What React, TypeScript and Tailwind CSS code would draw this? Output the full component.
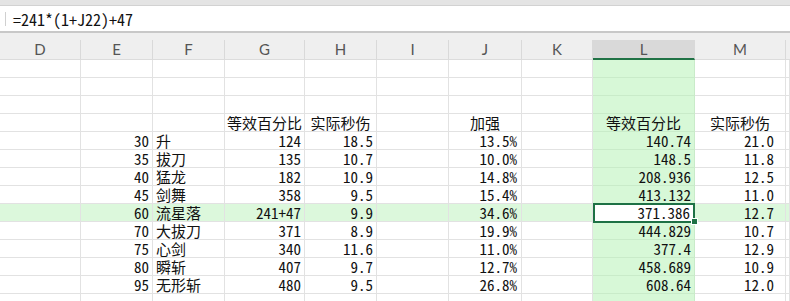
const cols = [
  { key: 'D', w: 'w-[81px]' },
  { key: 'E', w: 'w-[72px]' },
  { key: 'F', w: 'w-[72px]' },
  { key: 'G', w: 'w-[80px]' },
  { key: 'H', w: 'w-[72px]' },
  { key: 'I', w: 'w-[72px]' },
  { key: 'J', w: 'w-[73px]' },
  { key: 'K', w: 'w-[71px]' },
  { key: 'L', w: 'w-[102px]' },
  { key: 'M', w: 'w-[91px]' },
];

type Row = {
  lv: string;
  name: string;
  pct: string;
  dps: string;
  buff: string;
  eq: string;
  real: string;
  active?: boolean;
};

const rows: Row[] = [
  { lv: '30', name: '升', pct: '124', dps: '18.5', buff: '13.5%', eq: '140.74', real: '21.0' },
  { lv: '35', name: '拔刀', pct: '135', dps: '10.7', buff: '10.0%', eq: '148.5', real: '11.8' },
  { lv: '40', name: '猛龙', pct: '182', dps: '10.9', buff: '14.8%', eq: '208.936', real: '12.5' },
  { lv: '45', name: '剑舞', pct: '358', dps: '9.5', buff: '15.4%', eq: '413.132', real: '11.0' },
  { lv: '60', name: '流星落', pct: '241+47', dps: '9.9', buff: '34.6%', eq: '371.386', real: '12.7', active: true },
  { lv: '70', name: '大拔刀', pct: '371', dps: '8.9', buff: '19.9%', eq: '444.829', real: '10.7' },
  { lv: '75', name: '心剑', pct: '340', dps: '11.6', buff: '11.0%', eq: '377.4', real: '12.9' },
  { lv: '80', name: '瞬斩', pct: '407', dps: '9.7', buff: '12.7%', eq: '458.689', real: '10.9' },
  { lv: '95', name: '无形斩', pct: '480', dps: '9.5', buff: '26.8%', eq: '608.64', real: '12.0' },
];

const cellFont =
  "font-['Noto_Sans_Mono_CJK_SC','Noto_Sans_CJK_SC','Liberation_Mono',monospace] text-[15px] leading-[15px] text-[#111]";

function Cell({
  w,
  children,
  align = 'right',
  green,
  className = '',
}: {
  w: string;
  children?: React.ReactNode;
  align?: 'left' | 'right' | 'center';
  green?: boolean;
  className?: string;
}) {
  const a =
    align === 'right' ? 'justify-end pr-[3px]' : align === 'left' ? 'justify-start pl-[3px]' : 'justify-center';
  return (
    <div
      className={`${w} h-[18px] shrink-0 flex items-center whitespace-nowrap border-r border-b ${
        green ? 'bg-[#d7f8d7] border-[#c9ebc9]' : 'border-[#e2e2e2]'
      } ${a} ${className}`}
    >
      {children}
    </div>
  );
}

function EmptyRow() {
  return (
    <div className={`flex ${cellFont}`}>
      {cols.map((c) => (
        <Cell key={c.key} w={c.w} green={c.key === 'L'} />
      ))}
      <Cell w="flex-1" />
    </div>
  );
}

export default function App() {
  return (
    <div className="w-[790px] h-[301px] overflow-hidden bg-white">
      {/* top strip */}
      <div className="h-[6px] bg-[#e4e4e4] border-b border-[#d2d2d2]" />

      {/* formula bar */}
      <div className="h-[27px] flex items-center border-b-2 border-[#c8c8c8]">
        <div className="w-px h-[14px] bg-[#d0d0d0] ml-[5px]" />
        <span className="ml-[7px] font-['Noto_Sans_Mono_CJK_SC','Liberation_Mono',monospace] text-[16px] text-[#111]">
          =241*(1+J22)+47
        </span>
      </div>

      {/* column headers */}
      <div className="h-[27px] bg-[#efefef] flex items-end">
        {cols.map((c) => (
          <div
            key={c.key}
            className={`${c.w} h-[20px] shrink-0 flex items-center justify-center border-r border-[#d9d9d9] font-['Lato',sans-serif] text-[15px] text-[#555] ${
              c.key === 'L' ? 'bg-[#d9d9d9] text-[#3d5f4c] border-b-2 border-b-[#217346]' : 'border-b border-b-[#dcdcdc]'
            }`}
          >
            {c.key}
          </div>
        ))}
        <div className="flex-1 h-[20px] border-b border-[#dcdcdc]" />
      </div>

      {/* body */}
      <EmptyRow />
      <EmptyRow />
      <EmptyRow />

      <div className={`flex ${cellFont}`}>
        <Cell w="w-[81px]" />
        <Cell w="w-[72px]" />
        <Cell w="w-[72px]" />
        <Cell w="w-[80px]" align="center">等效百分比</Cell>
        <Cell w="w-[72px]" align="center">实际秒伤</Cell>
        <Cell w="w-[72px]" />
        <Cell w="w-[73px]" align="center">加强</Cell>
        <Cell w="w-[71px]" />
        <Cell w="w-[102px]" align="center" green>等效百分比</Cell>
        <Cell w="w-[91px]" align="center">实际秒伤</Cell>
        <Cell w="flex-1" />
      </div>

      {rows.map((r) => (
        <div key={r.lv} className={`flex ${cellFont} ${r.active ? 'bg-[#dcf8dc]' : ''}`}>
          <Cell w="w-[81px]" />
          <Cell w="w-[72px]">{r.lv}</Cell>
          <Cell w="w-[72px]" align="left">{r.name}</Cell>
          <Cell w="w-[80px]">{r.pct}</Cell>
          <Cell w="w-[72px]">{r.dps}</Cell>
          <Cell w="w-[72px]" />
          <Cell w="w-[73px]" className="pr-[4px]">{r.buff}</Cell>
          <Cell w="w-[71px]" />
          {r.active ? (
            <div className="relative w-[102px] h-[18px] shrink-0 flex items-center justify-end pr-[4px] bg-white border-r border-b border-[#e2e2e2]">
              {r.eq}
              <div className="absolute left-0 top-[-1px] w-[102px] h-[20px] border-[2px] border-[#1e7145]" />
              <div className="absolute right-[-4px] bottom-[-4px] w-[7px] h-[7px] bg-[#1e7145] border border-white" />
            </div>
          ) : (
            <Cell w="w-[102px]" green>{r.eq}</Cell>
          )}
          <Cell w="w-[91px]" className="pr-[11px]">{r.real}</Cell>
          <Cell w="flex-1" />
        </div>
      ))}

      <EmptyRow />
    </div>
  );
}
